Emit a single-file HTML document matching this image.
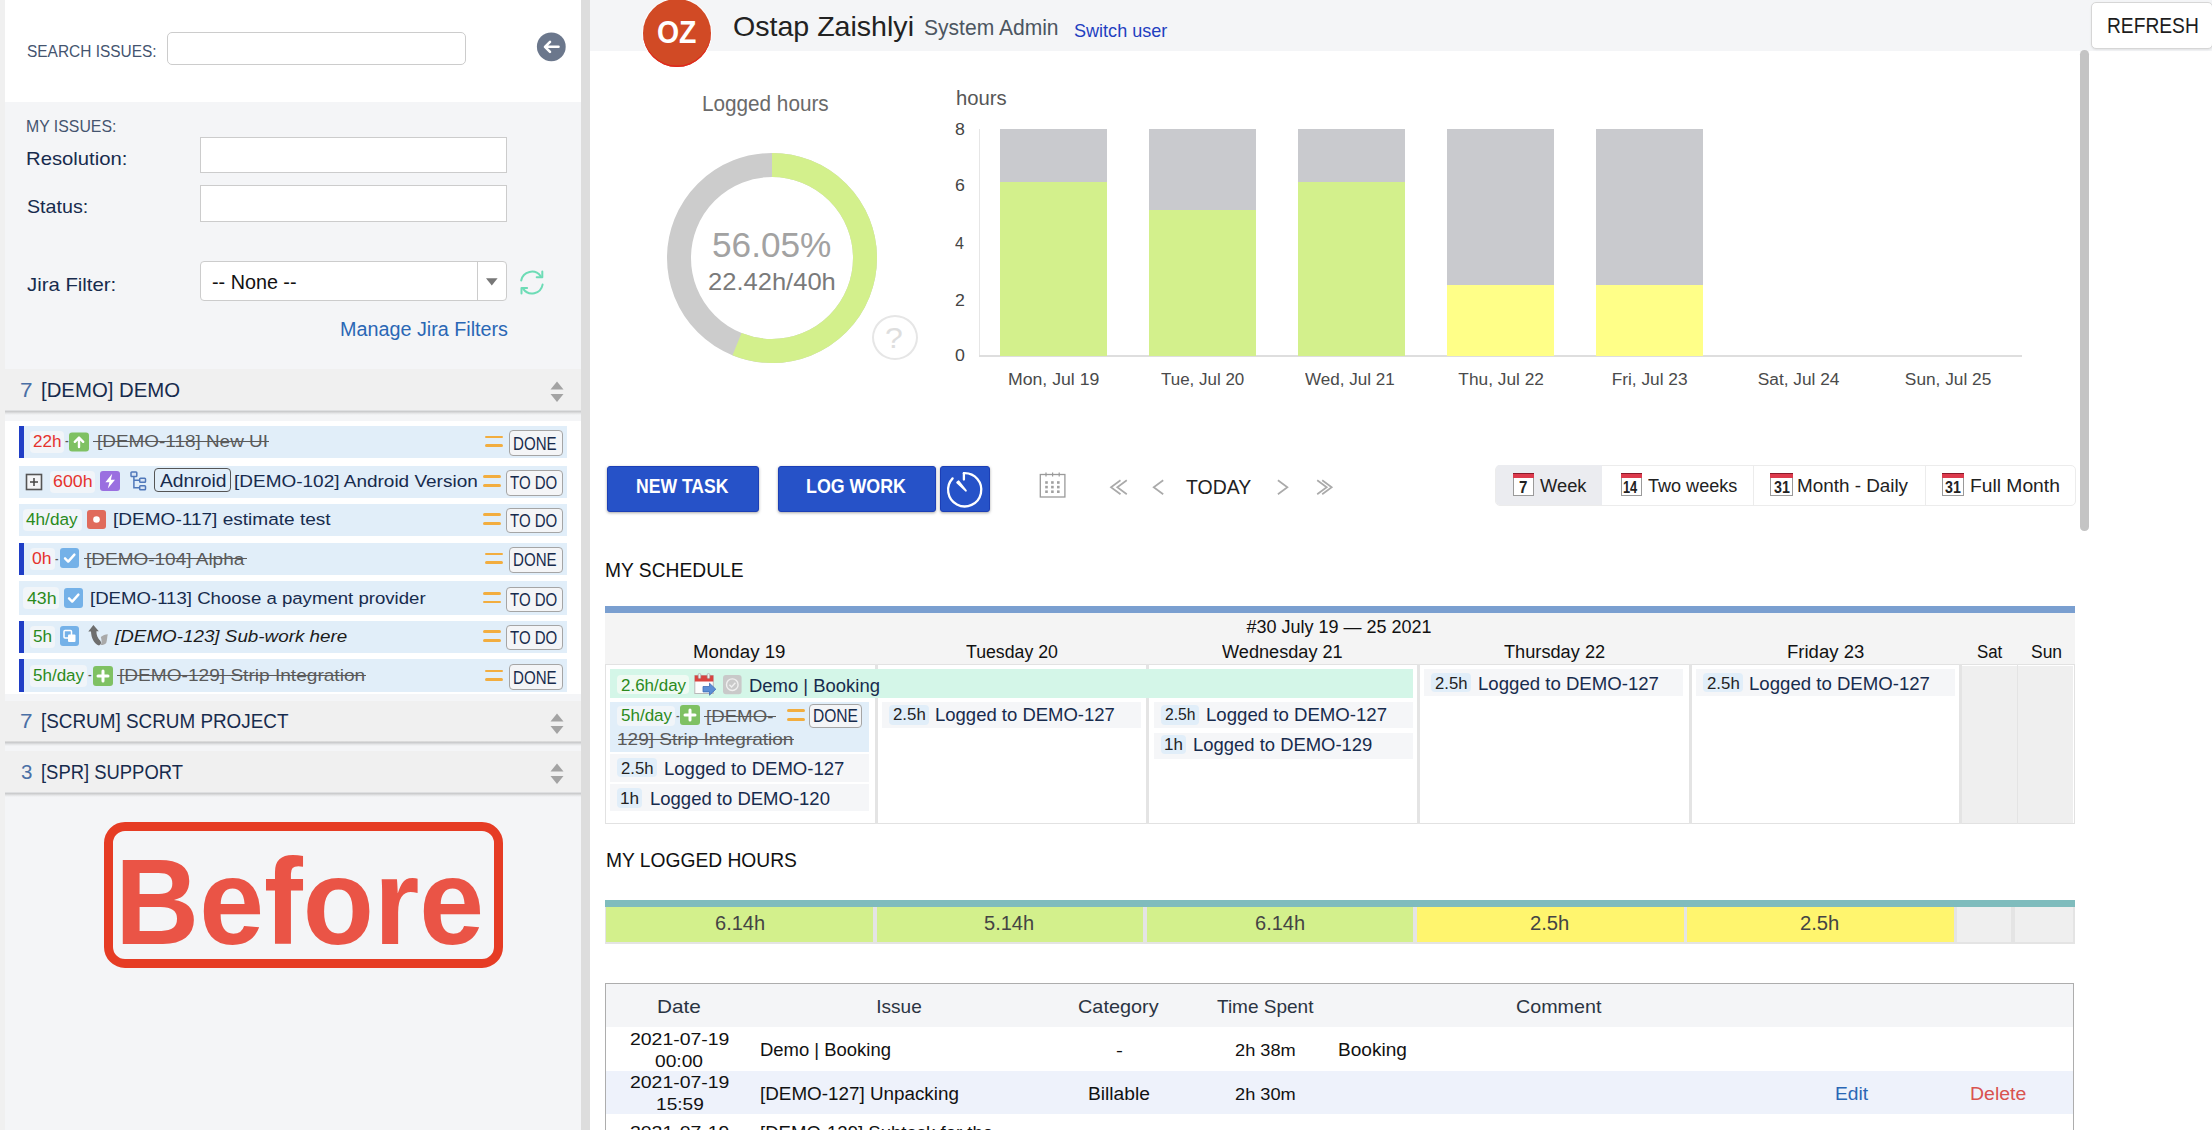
<!DOCTYPE html>
<html lang="en"><head><meta charset="utf-8"><title>Resource planning - My work</title>
<style>
html,body{margin:0;padding:0}
body{width:2212px;height:1130px;overflow:hidden;background:#fff;position:relative;font-family:"Liberation Sans",sans-serif}
.g{position:absolute;left:0;top:0;width:0;height:0}
.b{position:absolute;box-sizing:border-box}
.t{position:absolute;white-space:nowrap;line-height:1;transform-origin:0 0;display:block}
svg{display:block;overflow:visible}
svg text{font-family:"Liberation Sans",sans-serif}
</style></head>
<body>
<aside class="g" id="sidebar">
<div class="b" style="left:0px;top:0px;width:4.6px;height:1130px;background:#f0f0f0;"></div>
<div class="b" style="left:4.6px;top:0px;width:576.4px;height:1130px;background:#f4f5f7;"></div>
<div class="b" style="left:4.6px;top:0px;width:576.4px;height:102px;background:#ffffff;"></div>
<div class="b" style="left:581px;top:0px;width:9px;height:1130px;background:#dddddd;"></div>
<span class="t" style="left:26.5px;top:44px;font-size:16.8px;color:#44546f;transform:scaleX(0.9204);">SEARCH ISSUES:</span>
<div class="b" style="left:167px;top:32px;width:298.5px;height:33px;background:#fff;border:1px solid #ccc;border-radius:5px;"></div>
<svg class="b" style="left:536px;top:32px" width="30" height="30" viewBox="0 0 30 30"><circle cx="15.3" cy="14.8" r="14.4" fill="#6b778c"/><path d="M22.5 14.8H9.5M14 9.8l-5 5 5 5" fill="none" stroke="#fff" stroke-width="2.6" stroke-linecap="round" stroke-linejoin="round"/></svg>
<span class="t" style="left:25.58px;top:118px;font-size:17.3px;color:#44546f;transform:scaleX(0.9165);">MY ISSUES:</span>
<span class="t" style="left:25.91px;top:150px;font-size:18.5px;color:#172b4d;transform:scaleX(1.0950);">Resolution:</span>
<div class="b" style="left:199.5px;top:136.5px;width:307.5px;height:36.8px;background:#fff;border:1px solid #ccc;"></div>
<span class="t" style="left:27px;top:198px;font-size:18.5px;color:#172b4d;transform:scaleX(1.0629);">Status:</span>
<div class="b" style="left:199.5px;top:185.2px;width:307.5px;height:36.8px;background:#fff;border:1px solid #ccc;"></div>
<span class="t" style="left:27px;top:276px;font-size:18.5px;color:#172b4d;transform:scaleX(1.0992);">Jira Filter:</span>
<div class="b" style="left:199.5px;top:261px;width:307.5px;height:39.7px;background:#fff;border:1px solid #ccc;border-radius:4px;"></div>
<div class="b" style="left:477.3px;top:262px;width:1px;height:38px;background:#ccc;"></div>
<span class="t" style="left:212px;top:273px;font-size:19.5px;color:#111;transform:scaleX(1.0129);">-- None --</span>
<svg class="b" style="left:485px;top:277px" width="14" height="10" viewBox="0 0 14 10"><path d="M1 1.3h11.6L6.8 8.6z" fill="#777"/></svg>
<svg class="b" style="left:518px;top:269px" width="28" height="28" viewBox="0 0 28 28"><g fill="none" stroke="#6ddcb6" stroke-width="2" stroke-linecap="round" stroke-linejoin="round"><path d="M3.2 11.5A10.8 10.8 0 0 1 22.6 7.2"/><path d="M24.3 2.6v5.6h-5.6"/><path d="M24.6 15.6A10.8 10.8 0 0 1 5.2 19.9"/><path d="M3.5 24.5v-5.6h5.6"/></g></svg>
<span class="t" style="left:339.61px;top:319px;font-size:20px;color:#2a67b5;transform:scaleX(0.9878);">Manage Jira Filters</span>
<div class="b" style="left:4.6px;top:412px;width:576.4px;height:282px;background:#fff;"></div>
<div class="b" style="left:4.6px;top:412px;width:576.4px;height:8.5px;background:#f4f5f7;"></div>
<div class="b" style="left:4.6px;top:369px;width:576.4px;height:41px;background:#f0f0f0;"></div>
<div class="b" style="left:4.6px;top:409.5px;width:576.4px;height:5px;background:linear-gradient(rgba(0,0,0,.05),rgba(0,0,0,.17) 30%,rgba(0,0,0,.06) 70%,rgba(0,0,0,0));"></div>
<span class="t" style="left:19.9px;top:380px;font-size:20.5px;color:#4a6fa5;transform:scaleX(1.1000);">7</span>
<span class="t" style="left:40.51px;top:380px;font-size:20.5px;color:#172b4d;transform:scaleX(0.9932);">[DEMO] DEMO</span>
<svg class="b" style="left:549px;top:380px" width="16" height="24" viewBox="0 0 16 24"><path d="M1.5 9.5h13L8 1.5zM1.5 14h13L8 22z" fill="#a3a3a3"/></svg>
<div class="b" style="left:4.6px;top:701px;width:576.4px;height:40.5px;background:#f0f0f0;"></div>
<div class="b" style="left:4.6px;top:741px;width:576.4px;height:5px;background:linear-gradient(rgba(0,0,0,.05),rgba(0,0,0,.17) 30%,rgba(0,0,0,.06) 70%,rgba(0,0,0,0));"></div>
<span class="t" style="left:19.9px;top:711px;font-size:20.5px;color:#4a6fa5;transform:scaleX(1.1000);">7</span>
<span class="t" style="left:40.58px;top:711px;font-size:20.5px;color:#172b4d;transform:scaleX(0.9207);">[SCRUM] SCRUM PROJECT</span>
<svg class="b" style="left:549px;top:711.75px" width="16" height="24" viewBox="0 0 16 24"><path d="M1.5 9.5h13L8 1.5zM1.5 14h13L8 22z" fill="#a3a3a3"/></svg>
<div class="b" style="left:4.6px;top:751.3px;width:576.4px;height:40.7px;background:#f0f0f0;"></div>
<div class="b" style="left:4.6px;top:791.5px;width:576.4px;height:5px;background:linear-gradient(rgba(0,0,0,.05),rgba(0,0,0,.17) 30%,rgba(0,0,0,.06) 70%,rgba(0,0,0,0));"></div>
<span class="t" style="left:21px;top:762px;font-size:20.5px;color:#4a6fa5;">3</span>
<span class="t" style="left:40.6px;top:762px;font-size:20.5px;color:#172b4d;transform:scaleX(0.8987);">[SPR] SUPPORT</span>
<svg class="b" style="left:549px;top:762.15px" width="16" height="24" viewBox="0 0 16 24"><path d="M1.5 9.5h13L8 1.5zM1.5 14h13L8 22z" fill="#a3a3a3"/></svg>
<div class="b" style="left:19px;top:426.2px;width:548px;height:32px;background:#e1eef9;"></div>
<div class="b" style="left:19px;top:466px;width:548px;height:32px;background:#e1eef9;"></div>
<div class="b" style="left:19px;top:503.8px;width:548px;height:32px;background:#e1eef9;"></div>
<div class="b" style="left:19px;top:543.2px;width:548px;height:32px;background:#e1eef9;"></div>
<div class="b" style="left:19px;top:581.1px;width:548px;height:33.6px;background:#e1eef9;"></div>
<div class="b" style="left:19px;top:620.8px;width:548px;height:32px;background:#e1eef9;"></div>
<div class="b" style="left:19px;top:658.7px;width:548px;height:33.8px;background:#e1eef9;"></div>
<div class="b" style="left:19px;top:426.2px;width:5px;height:32px;background:#1f3ec6;"></div>
<div class="b" style="left:19px;top:543.2px;width:5px;height:32px;background:#1f3ec6;"></div>
<div class="b" style="left:19px;top:620.8px;width:5px;height:32px;background:#1f3ec6;"></div>
<div class="b" style="left:19px;top:658.7px;width:5px;height:33.8px;background:#1f3ec6;"></div>
<div class="b" style="left:30px;top:431.2px;width:33.5px;height:22px;background:#f1f5f9;border-radius:4px;"></div>
<span class="t" style="left:32.5px;top:433px;font-size:17.2px;color:#e5322d;transform:scaleX(0.9958);">22h</span>
<span class="t" style="left:64.8px;top:432px;font-size:17px;color:#5a5a5a;transform:scaleX(0.6600);">-</span>
<svg class="b" style="left:69.1px;top:432.4px" width="20" height="20" viewBox="0 0 20 20"><rect width="20" height="19" y=".5" rx="3" fill="#7fc163"/><path d="M10 15V6M5.8 9.8L10 5.6l4.2 4.2" fill="none" stroke="#fff" stroke-width="2.4" stroke-linecap="round" stroke-linejoin="round"/></svg>
<span class="t" style="left:96.7px;top:433px;font-size:17.2px;color:#5a5a5a;transform:scaleX(1.1004);">[DEMO-118] New UI</span>
<div class="b" style="left:93.2px;top:440.8px;width:176px;height:1.5px;background:#5a5a5a;"></div>
<div class="b" style="left:485px;top:435.6px;width:17.6px;height:2.9px;background:#f2ad3f;border-radius:1.5px;"></div>
<div class="b" style="left:485px;top:444.3px;width:17.6px;height:2.9px;background:#f2ad3f;border-radius:1.5px;"></div>
<div class="b" style="left:509.3px;top:430.2px;width:53.3px;height:25.7px;background:#f4f5f7;border:1px solid #a5a5a5;border-radius:4px;"></div>
<span class="t" style="left:513.46px;top:435px;font-size:18px;color:#172b4d;transform:scaleX(0.8392);">DONE</span>
<svg class="b" style="left:24.5px;top:473px" width="18" height="18" viewBox="0 0 18 18"><rect x="1.5" y="1.5" width="15" height="15" fill="#f4f5f7" stroke="#555" stroke-width="1.6"/><path d="M5 9h8M9 5v8" stroke="#444" stroke-width="1.5"/></svg>
<div class="b" style="left:49.6px;top:471px;width:45.2px;height:22px;background:#f1f5f9;border-radius:4px;"></div>
<span class="t" style="left:52.5px;top:473px;font-size:17.2px;color:#e5322d;transform:scaleX(1.0351);">600h</span>
<svg class="b" style="left:99.8px;top:471px" width="20" height="20" viewBox="0 0 20 20"><rect width="20" height="20" rx="3" fill="#9a6fe0"/><path d="M12.2 2.800L5.400 11.300h4l-1.600 6.100L15 8.700h-4.100z" fill="#fff"/></svg>
<svg class="b" style="left:129.5px;top:471px" width="20" height="20" viewBox="0 0 20 20"><g fill="#d9e4f4" stroke="#5078ba" stroke-width="1.500"><rect x="1" y="1" width="5.800" height="4.600" rx=".8"/><rect x="9.700" y="7.300" width="5.800" height="4" rx=".8"/><rect x="9.700" y="14.800" width="5.800" height="4" rx=".8"/><path d="M3.900 5.600v11.200h5.800M3.900 9.300h5.800" fill="none"/></g></svg>
<div class="b" style="left:154.3px;top:468.2px;width:76.7px;height:23.8px;border:1.3px solid #555;border-radius:4px;"></div>
<span class="t" style="left:160px;top:472px;font-size:18.8px;color:#172b4d;transform:scaleX(1.0266);">Adnroid</span>
<span class="t" style="left:234.4px;top:473px;font-size:17.2px;color:#172b4d;transform:scaleX(1.1046);">[DEMO-102] Android Version</span>
<div class="b" style="left:483.1px;top:475.3px;width:17.6px;height:2.9px;background:#f2ad3f;border-radius:1.5px;"></div>
<div class="b" style="left:483.1px;top:484px;width:17.6px;height:2.9px;background:#f2ad3f;border-radius:1.5px;"></div>
<div class="b" style="left:506px;top:470px;width:56.6px;height:25.7px;background:#f4f5f7;border:1px solid #a5a5a5;border-radius:4px;"></div>
<span class="t" style="left:509.8px;top:474px;font-size:18px;color:#172b4d;transform:scaleX(0.8346);">TO DO</span>
<div class="b" style="left:23px;top:508.8px;width:58.8px;height:22px;background:#f1f5f9;border-radius:4px;"></div>
<span class="t" style="left:26px;top:511px;font-size:17.2px;color:#2a8a1c;">4h/day</span>
<svg class="b" style="left:87px;top:510.2px" width="20" height="20" viewBox="0 0 20 20"><rect width="19" height="19" rx="3" fill="#e06b5c"/><circle cx="9.5" cy="9.5" r="3.3" fill="#fff"/></svg>
<span class="t" style="left:113.09px;top:511px;font-size:17.2px;color:#172b4d;transform:scaleX(1.1080);">[DEMO-117] estimate test</span>
<div class="b" style="left:483.1px;top:513.1px;width:17.6px;height:2.9px;background:#f2ad3f;border-radius:1.5px;"></div>
<div class="b" style="left:483.1px;top:521.8px;width:17.6px;height:2.9px;background:#f2ad3f;border-radius:1.5px;"></div>
<div class="b" style="left:506px;top:507.8px;width:56.6px;height:25.7px;background:#f4f5f7;border:1px solid #a5a5a5;border-radius:4px;"></div>
<span class="t" style="left:509.8px;top:512px;font-size:18px;color:#172b4d;transform:scaleX(0.8346);">TO DO</span>
<div class="b" style="left:30px;top:548.2px;width:24.7px;height:22px;background:#f1f5f9;border-radius:4px;"></div>
<span class="t" style="left:32px;top:550px;font-size:17.2px;color:#e5322d;transform:scaleX(1.0238);">0h</span>
<span class="t" style="left:54.9px;top:550px;font-size:17px;color:#5a5a5a;transform:scaleX(0.6200);">-</span>
<svg class="b" style="left:60px;top:548.2px" width="20" height="20" viewBox="0 0 20 20"><rect width="19" height="20" rx="3" fill="#74b1e8"/><path d="M5 10.3l3.2 3.3 6.2-7" fill="none" stroke="#fff" stroke-width="2.4" stroke-linecap="round" stroke-linejoin="round"/></svg>
<span class="t" style="left:86.1px;top:551px;font-size:17.2px;color:#5a5a5a;transform:scaleX(1.1045);">[DEMO-104] Alpha</span>
<div class="b" style="left:83.5px;top:557.8px;width:163.5px;height:1.5px;background:#5a5a5a;"></div>
<div class="b" style="left:485px;top:552.6px;width:17.6px;height:2.9px;background:#f2ad3f;border-radius:1.5px;"></div>
<div class="b" style="left:485px;top:561.3px;width:17.6px;height:2.9px;background:#f2ad3f;border-radius:1.5px;"></div>
<div class="b" style="left:509.3px;top:547.2px;width:53.3px;height:25.7px;background:#f4f5f7;border:1px solid #a5a5a5;border-radius:4px;"></div>
<span class="t" style="left:513.46px;top:551px;font-size:18px;color:#172b4d;transform:scaleX(0.8392);">DONE</span>
<div class="b" style="left:23px;top:587.1px;width:35.7px;height:22px;background:#f1f5f9;border-radius:4px;"></div>
<span class="t" style="left:26.5px;top:590px;font-size:17.2px;color:#2a8a1c;transform:scaleX(1.0314);">43h</span>
<svg class="b" style="left:64px;top:587.7px" width="20" height="20" viewBox="0 0 20 20"><rect width="19" height="20" rx="3" fill="#74b1e8"/><path d="M5 10.3l3.2 3.3 6.2-7" fill="none" stroke="#fff" stroke-width="2.4" stroke-linecap="round" stroke-linejoin="round"/></svg>
<span class="t" style="left:90.12px;top:590px;font-size:17.2px;color:#172b4d;transform:scaleX(1.0820);">[DEMO-113] Choose a payment provider</span>
<div class="b" style="left:483.1px;top:591.9px;width:17.6px;height:2.9px;background:#f2ad3f;border-radius:1.5px;"></div>
<div class="b" style="left:483.1px;top:600.6px;width:17.6px;height:2.9px;background:#f2ad3f;border-radius:1.5px;"></div>
<div class="b" style="left:506px;top:586.7px;width:56.6px;height:25.7px;background:#f4f5f7;border:1px solid #a5a5a5;border-radius:4px;"></div>
<span class="t" style="left:509.8px;top:591px;font-size:18px;color:#172b4d;transform:scaleX(0.8346);">TO DO</span>
<div class="b" style="left:30px;top:625.8px;width:24.7px;height:22px;background:#f1f5f9;border-radius:4px;"></div>
<span class="t" style="left:32.5px;top:628px;font-size:17.2px;color:#2a8a1c;transform:scaleX(0.9968);">5h</span>
<svg class="b" style="left:60px;top:625.8px" width="20" height="20" viewBox="0 0 20 20"><rect width="19" height="20" rx="3" fill="#74b1e8"/><rect x="4" y="4.5" width="7.5" height="7.5" rx="1" fill="none" stroke="#fff" stroke-width="1.5"/><rect x="8" y="8.5" width="7.5" height="7.5" rx="1" fill="#fff"/></svg>
<svg class="b" style="left:87.5px;top:625.3px" width="20" height="20" viewBox="0 0 20 20"><path d="M5.4.1l5.400 6.100H8.400c0 3.800 1.100 6.800 4.100 9.800 1 1.500.8 3.500-1.500 4.500C6 19 3.200 13 3 6.600H.3z" fill="#6e6e6e"/><path d="M12.8 12c1.700-1.500 4.700-2.500 7-2.700-.8 2.700-.6 6.200-1.600 8.700-1.700 1.800-3.700 2.300-5.700 2 1.500-2 1.300-5 .3-8z" fill="#a9a9a9"/></svg>
<span class="t" style="left:115.4px;top:628px;font-size:17.2px;color:#1b1b1b;transform:scaleX(1.0951);font-style:italic;">[DEMO-123] Sub-work here</span>
<div class="b" style="left:483.1px;top:630.1px;width:17.6px;height:2.9px;background:#f2ad3f;border-radius:1.5px;"></div>
<div class="b" style="left:483.1px;top:638.8px;width:17.6px;height:2.9px;background:#f2ad3f;border-radius:1.5px;"></div>
<div class="b" style="left:506px;top:624.8px;width:56.6px;height:25.7px;background:#f4f5f7;border:1px solid #a5a5a5;border-radius:4px;"></div>
<span class="t" style="left:509.8px;top:629px;font-size:18px;color:#172b4d;transform:scaleX(0.8346);">TO DO</span>
<div class="b" style="left:30px;top:664.7px;width:57.2px;height:22px;background:#f1f5f9;border-radius:4px;"></div>
<span class="t" style="left:32.5px;top:667px;font-size:17.2px;color:#2a8a1c;transform:scaleX(0.9902);">5h/day</span>
<span class="t" style="left:88.2px;top:666px;font-size:17px;color:#5a5a5a;transform:scaleX(0.6400);">-</span>
<svg class="b" style="left:92.6px;top:665.5px" width="20" height="20" viewBox="0 0 20 20"><rect width="20" height="20" rx="3" fill="#7fc163"/><path d="M10 5v10M5 10h10" stroke="#fff" stroke-width="3" stroke-linecap="round"/></svg>
<span class="t" style="left:119.29px;top:667px;font-size:17.2px;color:#5a5a5a;transform:scaleX(1.1106);">[DEMO-129] Strip Integration</span>
<div class="b" style="left:117px;top:674.9px;width:248.5px;height:1.5px;background:#5a5a5a;"></div>
<div class="b" style="left:485px;top:669.6px;width:17.6px;height:2.9px;background:#f2ad3f;border-radius:1.5px;"></div>
<div class="b" style="left:485px;top:678.3px;width:17.6px;height:2.9px;background:#f2ad3f;border-radius:1.5px;"></div>
<div class="b" style="left:509.3px;top:664.4px;width:53.3px;height:25.7px;background:#f4f5f7;border:1px solid #a5a5a5;border-radius:4px;"></div>
<span class="t" style="left:513.46px;top:669px;font-size:18px;color:#172b4d;transform:scaleX(0.8392);">DONE</span>
<div class="b" style="left:104.3px;top:822px;width:398.5px;height:146px;border:9px solid #e63c24;border-radius:21px;"></div>
<span class="t" style="left:115.33px;top:842px;font-size:121.5px;color:#ea5446;transform:scaleX(0.9591);font-weight:bold;">Before</span>
</aside>
<header class="g" id="summary">
<div class="b" style="left:590px;top:0px;width:1622px;height:51px;background:#f4f5f7;"></div>
<div class="b" style="left:642.8px;top:-0.8px;width:67.9px;height:67.9px;background:#d14a25;border-radius:50%;box-shadow:inset 0 -1.5px 0 #e0281c,0 0 0 1px rgba(255,255,255,.85);"></div>
<span class="t" style="left:656.68px;top:17px;font-size:31px;color:#fff;transform:scaleX(0.9166);font-weight:bold;">OZ</span>
<span class="t" style="left:733.36px;top:13px;font-size:27.5px;color:#222;transform:scaleX(1.0388);">Ostap Zaishlyi</span>
<span class="t" style="left:924.2px;top:18px;font-size:21.5px;color:#4c5661;transform:scaleX(0.9794);">System Admin</span>
<span class="t" style="left:1074px;top:21px;font-size:19px;color:#1f3fc0;transform:scaleX(0.9507);">Switch user</span>
<div class="b" style="left:2091px;top:1.5px;width:122px;height:47.3px;background:#fff;border:1px solid #d6d6d6;border-radius:5px;box-shadow:0 1px 2px rgba(0,0,0,.08);"></div>
<span class="t" style="left:2106.83px;top:15px;font-size:22px;color:#1d1d1d;transform:scaleX(0.8728);">REFRESH</span>
<div class="b" style="left:2080.3px;top:49.7px;width:8.6px;height:481.8px;background:#c4c4c4;border-radius:4.3px;"></div>
<span class="t" style="left:702.44px;top:94px;font-size:21.5px;color:#6a6a6a;transform:scaleX(0.9634);">Logged hours</span>
<svg class="b" style="left:660px;top:146px" width="224" height="224" viewBox="660 146 224 224"><circle cx="772" cy="258" r="93" fill="none" stroke="#cccccc" stroke-width="24"/><circle cx="772" cy="258" r="93" fill="none" stroke="#d3f08c" stroke-width="24" stroke-dasharray="327.52 256.82" transform="rotate(-90 772 258)"/></svg>
<span class="t" style="left:712.19px;top:227px;font-size:35px;color:#a2a2a2;transform:scaleX(1.0061);">56.05%</span>
<span class="t" style="left:707.93px;top:270px;font-size:23.8px;color:#7a7a7a;transform:scaleX(1.0730);">22.42h/40h</span>
<div class="b" style="left:871.5px;top:314.5px;width:46px;height:45px;border:2px solid #e6e6e6;border-radius:50%;"></div>
<span class="t" style="left:885.43px;top:323px;font-size:30px;color:#dedede;transform:scaleX(1.0667);">?</span>
<span class="t" style="left:956.01px;top:88px;font-size:20.5px;color:#565656;transform:scaleX(0.9894);">hours</span>
<div class="b" style="left:978.5px;top:129px;width:1.5px;height:228px;background:#e6e6e6;"></div>
<div class="b" style="left:978.5px;top:355.4px;width:1043.5px;height:1.6px;background:#dedede;"></div>
<div class="b" style="left:1000px;top:129px;width:107px;height:227px;background:#c9cace;"></div>
<div class="b" style="left:1000px;top:182px;width:107px;height:174px;background:#d3f08c;"></div>
<div class="b" style="left:1149px;top:129px;width:107px;height:227px;background:#c9cace;"></div>
<div class="b" style="left:1149px;top:210px;width:107px;height:146px;background:#d3f08c;"></div>
<div class="b" style="left:1298px;top:129px;width:107px;height:227px;background:#c9cace;"></div>
<div class="b" style="left:1298px;top:182px;width:107px;height:174px;background:#d3f08c;"></div>
<div class="b" style="left:1447px;top:129px;width:107px;height:227px;background:#c9cace;"></div>
<div class="b" style="left:1447px;top:285px;width:107px;height:71px;background:#ffff88;"></div>
<div class="b" style="left:1596px;top:129px;width:107px;height:227px;background:#c9cace;"></div>
<div class="b" style="left:1596px;top:285px;width:107px;height:71px;background:#ffff88;"></div>
<span class="t" style="left:954.7px;top:121px;font-size:17.2px;color:#444;transform:scaleX(1.0333);">8</span>
<span class="t" style="left:954.7px;top:177px;font-size:17.2px;color:#444;transform:scaleX(1.0333);">6</span>
<span class="t" style="left:954.7px;top:235px;font-size:17.2px;color:#444;transform:scaleX(0.9300);">4</span>
<span class="t" style="left:954.7px;top:292px;font-size:17.2px;color:#444;transform:scaleX(1.0333);">2</span>
<span class="t" style="left:954.7px;top:347px;font-size:17.2px;color:#444;transform:scaleX(1.0333);">0</span>
<span class="t" style="left:1007.78px;top:371px;font-size:17.3px;color:#4a4a4a;transform:scaleX(1.0225);">Mon, Jul 19</span>
<span class="t" style="left:1160.8px;top:371px;font-size:17.3px;color:#4a4a4a;transform:scaleX(0.9817);">Tue, Jul 20</span>
<span class="t" style="left:1305.2px;top:371px;font-size:17.3px;color:#4a4a4a;transform:scaleX(0.9875);">Wed, Jul 21</span>
<span class="t" style="left:1458.36px;top:371px;font-size:17.3px;color:#4a4a4a;">Thu, Jul 22</span>
<span class="t" style="left:1611.67px;top:371px;font-size:17.3px;color:#4a4a4a;">Fri, Jul 23</span>
<span class="t" style="left:1757.78px;top:371px;font-size:17.3px;color:#4a4a4a;">Sat, Jul 24</span>
<span class="t" style="left:1904.87px;top:371px;font-size:17.3px;color:#4a4a4a;">Sun, Jul 25</span>
</header>
<section class="g" id="schedule">
<div class="b" style="left:606.5px;top:466px;width:152.5px;height:45.8px;background:#2652c8;border:1px solid #1c3fb6;border-radius:3px;box-shadow:0 1px 3px rgba(0,0,0,.35);"></div>
<span class="t" style="left:636.31px;top:477px;font-size:19.8px;color:#fff;transform:scaleX(0.8888);font-weight:bold;">NEW TASK</span>
<div class="b" style="left:778px;top:466px;width:158px;height:45.8px;background:#2652c8;border:1px solid #1c3fb6;border-radius:3px;box-shadow:0 1px 3px rgba(0,0,0,.35);"></div>
<span class="t" style="left:806.4px;top:477px;font-size:19.8px;color:#fff;transform:scaleX(0.9007);font-weight:bold;">LOG WORK</span>
<div class="b" style="left:940px;top:466px;width:50.3px;height:45.8px;background:#2652c8;border:1px solid #1c3fb6;border-radius:3px;box-shadow:0 1px 3px rgba(0,0,0,.35);"></div>
<svg class="b" style="left:944px;top:469px" width="42" height="42" viewBox="0 0 42 42"><g fill="none" stroke="#fff" stroke-width="2.3" stroke-linecap="round"><path d="M19.9 4.2A16.6 16.6 0 1 1 8.6 9.4"/><path d="M19.9 4.2v6.300"/></g><path d="M21.8 21.600L13.200 13.600l1.300-1.200z" fill="#fff" stroke="#fff" stroke-width="2" stroke-linejoin="round"/></svg>
<svg class="b" style="left:1038px;top:471px" width="30" height="28" viewBox="0 0 30 28"><rect x="2.300" y="3.500" width="24.600" height="22.500" fill="#fff" stroke="#9a9a9a" stroke-width="1.300"/><path d="M8 1.500v4M14.600 1.500v4M21.200 1.500v4" stroke="#9a9a9a" stroke-width="1.200"/><g fill="#a0a0a0"><rect x="7.2" y="10.2" width="2.600" height="2.600"/><rect x="7.2" y="14.8" width="2.600" height="2.600"/><rect x="7.2" y="19.4" width="2.600" height="2.600"/><rect x="13.1" y="10.2" width="2.600" height="2.600"/><rect x="13.1" y="14.8" width="2.600" height="2.600"/><rect x="13.1" y="19.4" width="2.600" height="2.600"/><rect x="19" y="10.2" width="2.600" height="2.600"/><rect x="19" y="14.8" width="2.600" height="2.600"/><rect x="19" y="19.4" width="2.600" height="2.600"/></g></svg>
<svg class="b" style="left:0;top:0" width="2212" height="1130" viewBox="0 0 2212 1130"><path d="M1120.5 480.300L1111 487.300L1120.5 494.300M1126.8 480.300L1117.3 487.300L1126.8 494.300M1163.2 480.300L1153.7 487.300L1163.2 494.300M1277.9 480.300L1287.4 487.300L1277.9 494.300M1317.2 480.300L1326.7 487.300L1317.2 494.300M1322.2 480.300L1331.7 487.300L1322.2 494.300" fill="none" stroke="#aaaaaa" stroke-width="1.700"/></svg>
<span class="t" style="left:1185.8px;top:477px;font-size:20.5px;color:#222;transform:scaleX(0.9485);">TODAY</span>
<div class="b" style="left:1495.4px;top:464.6px;width:580.2px;height:41.4px;background:#fff;border:1px solid #ececec;border-radius:5px;"></div>
<div class="b" style="left:1496px;top:465.2px;width:106.4px;height:40.2px;background:#ebecf0;border-radius:4px 0 0 4px;"></div>
<div class="b" style="left:1752.8px;top:465.5px;width:1.3px;height:39.5px;background:#ececec;"></div>
<div class="b" style="left:1925.1px;top:465.5px;width:1.3px;height:39.5px;background:#ececec;"></div>
<div class="b" style="left:1512.9px;top:473px;width:20.8px;height:22.8px;background:#fff;border:1px solid #9a9a9a;"></div>
<div class="b" style="left:1512.9px;top:473px;width:20.8px;height:5.4px;background:#dc3a4c;border-top:1px solid #8b1a2b;"></div>
<span class="t" style="left:1519.2px;top:480px;font-size:15.8px;color:#222;transform:scaleX(0.9556);font-weight:bold;">7</span>
<span class="t" style="left:1540.1px;top:477px;font-size:18.3px;color:#222;">Week</span>
<div class="b" style="left:1621px;top:473px;width:20.9px;height:22.8px;background:#fff;border:1px solid #9a9a9a;"></div>
<div class="b" style="left:1621px;top:473px;width:20.9px;height:5.4px;background:#dc3a4c;border-top:1px solid #8b1a2b;"></div>
<span class="t" style="left:1623.19px;top:480px;font-size:15.8px;color:#222;transform:scaleX(0.8102);font-weight:bold;">14</span>
<span class="t" style="left:1648.2px;top:477px;font-size:18.3px;color:#222;transform:scaleX(0.9869);">Two weeks</span>
<div class="b" style="left:1770.3px;top:473px;width:22.7px;height:22.8px;background:#fff;border:1px solid #9a9a9a;"></div>
<div class="b" style="left:1770.3px;top:473px;width:22.7px;height:5.4px;background:#dc3a4c;border-top:1px solid #8b1a2b;"></div>
<span class="t" style="left:1773.5px;top:480px;font-size:15.8px;color:#222;transform:scaleX(0.8996);font-weight:bold;">31</span>
<span class="t" style="left:1797.47px;top:477px;font-size:18.3px;color:#222;transform:scaleX(1.0312);">Month - Daily</span>
<div class="b" style="left:1941.6px;top:473px;width:22.7px;height:22.8px;background:#fff;border:1px solid #9a9a9a;"></div>
<div class="b" style="left:1941.6px;top:473px;width:22.7px;height:5.4px;background:#dc3a4c;border-top:1px solid #8b1a2b;"></div>
<span class="t" style="left:1944.8px;top:480px;font-size:15.8px;color:#222;transform:scaleX(0.8996);font-weight:bold;">31</span>
<span class="t" style="left:1969.55px;top:477px;font-size:18.3px;color:#222;transform:scaleX(1.0532);">Full Month</span>
<span class="t" style="left:605.36px;top:560px;font-size:20.5px;color:#111;transform:scaleX(0.9378);">MY SCHEDULE</span>
<div class="b" style="left:605px;top:606px;width:1469.5px;height:7.3px;background:#7a9fd0;"></div>
<div class="b" style="left:605px;top:613.3px;width:1469.5px;height:50.7px;background:#f4f4f4;"></div>
<span class="t" style="left:1246.4px;top:618px;font-size:18px;color:#111;">#30 July 19 — 25 2021</span>
<span class="t" style="left:693.16px;top:643px;font-size:18px;color:#111;transform:scaleX(1.0381);">Monday 19</span>
<span class="t" style="left:965.5px;top:643px;font-size:18px;color:#111;transform:scaleX(0.9841);">Tuesday 20</span>
<span class="t" style="left:1222.4px;top:643px;font-size:18px;color:#111;transform:scaleX(1.0080);">Wednesday 21</span>
<span class="t" style="left:1504px;top:643px;font-size:18px;color:#111;transform:scaleX(1.0106);">Thursday 22</span>
<span class="t" style="left:1786.57px;top:643px;font-size:18px;color:#111;transform:scaleX(1.0294);">Friday 23</span>
<span class="t" style="left:1976.7px;top:643px;font-size:18px;color:#111;transform:scaleX(0.9365);">Sat</span>
<span class="t" style="left:2030.6px;top:643px;font-size:18px;color:#111;transform:scaleX(0.9704);">Sun</span>
<div class="b" style="left:605px;top:664px;width:1469.5px;height:160px;background:#fff;border:1.500px solid #e2e2e2;"></div>
<div class="b" style="left:1960.5px;top:665.5px;width:112.5px;height:157.5px;background:#efefef;"></div>
<div class="b" style="left:875.2px;top:664px;width:3px;height:160px;background:#e4e4e4;"></div>
<div class="b" style="left:1145.5px;top:664px;width:3px;height:160px;background:#e4e4e4;"></div>
<div class="b" style="left:1417.3px;top:664px;width:3px;height:160px;background:#e4e4e4;"></div>
<div class="b" style="left:1689.3px;top:664px;width:3px;height:160px;background:#e4e4e4;"></div>
<div class="b" style="left:1958.5px;top:664px;width:3px;height:160px;background:#e4e4e4;"></div>
<div class="b" style="left:2016.5px;top:664px;width:1.8px;height:160px;background:#e4e4e4;"></div>
<div class="b" style="left:610px;top:669.2px;width:803.2px;height:28.8px;background:#d4f6e8;"></div>
<div class="b" style="left:617.3px;top:675px;width:71.7px;height:19.3px;background:#effaf3;border-radius:4px;"></div>
<span class="t" style="left:620.5px;top:677px;font-size:17.2px;color:#2a8a1c;transform:scaleX(0.9873);">2.6h/day</span>
<svg class="b" style="left:694px;top:673px" width="23" height="24" viewBox="0 0 23 24"><rect x=".8" y="2.500" width="18.500" height="18" fill="#fdfdfd" stroke="#b9b9b9" stroke-width="1"/><rect x=".8" y="2.500" width="18.500" height="6" fill="#d9433f"/><rect x="4.200" y=".6" width="2.600" height="4.800" rx="1" fill="#eee" stroke="#999" stroke-width=".6"/><rect x="13.200" y=".6" width="2.600" height="4.800" rx="1" fill="#eee" stroke="#999" stroke-width=".6"/><path d="M9 13.500h6.500v-3.300l6.300 6-6.300 6v-3.300H9z" fill="#5c8fd6" stroke="#3d6db5" stroke-width=".8"/></svg>
<svg class="b" style="left:723px;top:675px" width="19" height="20" viewBox="0 0 19 20"><rect width="18.600" height="19.300" rx="3" fill="#c9c9c9"/><circle cx="9.300" cy="9.700" r="5.800" fill="none" stroke="#efefef" stroke-width="1.400"/><path d="M6.400 9.800l2.200 2.200 3.800-4.200" fill="none" stroke="#efefef" stroke-width="1.400"/></svg>
<span class="t" style="left:748.67px;top:677px;font-size:18px;color:#172b4d;transform:scaleX(1.0252);">Demo | Booking</span>
<div class="b" style="left:610px;top:702px;width:259px;height:49.8px;background:#e1eef9;"></div>
<div class="b" style="left:617.3px;top:705.5px;width:57.4px;height:20.5px;background:#f1f5f9;border-radius:4px;"></div>
<span class="t" style="left:620.5px;top:707px;font-size:17.2px;color:#2a8a1c;transform:scaleX(0.9902);">5h/day</span>
<span class="t" style="left:675.7px;top:707px;font-size:17px;color:#5a5a5a;transform:scaleX(0.6400);">-</span>
<svg class="b" style="left:680px;top:705.3px" width="20" height="20" viewBox="0 0 20 20"><rect width="20" height="20" rx="3" fill="#7fc163"/><path d="M10 5v10M5 10h10" stroke="#fff" stroke-width="3" stroke-linecap="round"/></svg>
<span class="t" style="left:705.91px;top:708px;font-size:17.2px;color:#5a5a5a;transform:scaleX(1.0856);">[DEMO-</span>
<div class="b" style="left:704.4px;top:715.8px;width:71.2px;height:1.5px;background:#5a5a5a;"></div>
<div class="b" style="left:787.3px;top:709.2px;width:18px;height:3px;background:#f2ad3f;border-radius:1.500px;"></div>
<div class="b" style="left:787.3px;top:718.3px;width:18px;height:3px;background:#f2ad3f;border-radius:1.500px;"></div>
<div class="b" style="left:808.5px;top:704.4px;width:53.1px;height:23.9px;background:#f4f5f7;border:1px solid #a5a5a5;border-radius:4px;"></div>
<span class="t" style="left:813.11px;top:708px;font-size:17.5px;color:#172b4d;transform:scaleX(0.8898);">DONE</span>
<span class="t" style="left:617.29px;top:731px;font-size:17.2px;color:#5a5a5a;transform:scaleX(1.1050);">129] Strip Integration</span>
<div class="b" style="left:618px;top:738.6px;width:176px;height:1.5px;background:#5a5a5a;"></div>
<div class="b" style="left:610px;top:753.6px;width:259px;height:28.6px;background:#f5f6f8;"></div>
<div class="b" style="left:617.2px;top:757.7px;width:39.4px;height:19.5px;background:#e1eef9;border-radius:4px;"></div>
<span class="t" style="left:621px;top:760px;font-size:17.2px;color:#222;transform:scaleX(0.9729);">2.5h</span>
<span class="t" style="left:663.66px;top:761px;font-size:17.8px;color:#172b4d;transform:scaleX(1.0427);">Logged to DEMO-127</span>
<div class="b" style="left:610px;top:784.1px;width:259px;height:27.3px;background:#f5f6f8;"></div>
<div class="b" style="left:617.2px;top:788px;width:25px;height:19.7px;background:#e1eef9;border-radius:4px;"></div>
<span class="t" style="left:620px;top:790px;font-size:17.2px;color:#222;">1h</span>
<span class="t" style="left:649.96px;top:791px;font-size:17.8px;color:#172b4d;transform:scaleX(1.0402);">Logged to DEMO-120</span>
<div class="b" style="left:881.8px;top:701.8px;width:259.2px;height:26.7px;background:#f5f6f8;"></div>
<div class="b" style="left:889px;top:705.2px;width:39.6px;height:19.6px;background:#e1eef9;border-radius:4px;"></div>
<span class="t" style="left:892.8px;top:706px;font-size:17.2px;color:#222;transform:scaleX(0.9789);">2.5h</span>
<span class="t" style="left:935.26px;top:707px;font-size:17.8px;color:#172b4d;transform:scaleX(1.0398);">Logged to DEMO-127</span>
<div class="b" style="left:1154px;top:701.8px;width:259.2px;height:26.7px;background:#f5f6f8;"></div>
<div class="b" style="left:1161.2px;top:705.2px;width:37.4px;height:19.6px;background:#e1eef9;border-radius:4px;"></div>
<span class="t" style="left:1165px;top:706px;font-size:17.2px;color:#222;transform:scaleX(0.9120);">2.5h</span>
<span class="t" style="left:1206.05px;top:707px;font-size:17.8px;color:#172b4d;transform:scaleX(1.0468);">Logged to DEMO-127</span>
<div class="b" style="left:1154px;top:733.3px;width:259.2px;height:25.4px;background:#f5f6f8;"></div>
<div class="b" style="left:1161.2px;top:734.5px;width:24.7px;height:19.3px;background:#e1eef9;border-radius:4px;"></div>
<span class="t" style="left:1164.01px;top:736px;font-size:17.2px;color:#222;transform:scaleX(0.9853);">1h</span>
<span class="t" style="left:1192.76px;top:737px;font-size:17.8px;color:#172b4d;transform:scaleX(1.0367);">Logged to DEMO-129</span>
<div class="b" style="left:1424.2px;top:669.4px;width:259.2px;height:26.6px;background:#f5f6f8;"></div>
<div class="b" style="left:1431.4px;top:672.9px;width:39.3px;height:19.4px;background:#e1eef9;border-radius:4px;"></div>
<span class="t" style="left:1435.2px;top:675px;font-size:17.2px;color:#222;transform:scaleX(0.9698);">2.5h</span>
<span class="t" style="left:1477.65px;top:676px;font-size:17.8px;color:#172b4d;transform:scaleX(1.0462);">Logged to DEMO-127</span>
<div class="b" style="left:1696.2px;top:669.4px;width:259.3px;height:26.6px;background:#f5f6f8;"></div>
<div class="b" style="left:1703.4px;top:672.9px;width:39.6px;height:19.4px;background:#e1eef9;border-radius:4px;"></div>
<span class="t" style="left:1707.2px;top:675px;font-size:17.2px;color:#222;transform:scaleX(0.9789);">2.5h</span>
<span class="t" style="left:1749.35px;top:676px;font-size:17.8px;color:#172b4d;transform:scaleX(1.0462);">Logged to DEMO-127</span>
</section>
<section class="g" id="logged">
<span class="t" style="left:605.56px;top:850px;font-size:20.5px;color:#111;transform:scaleX(0.9381);">MY LOGGED HOURS</span>
<div class="b" style="left:605px;top:899.6px;width:1469.5px;height:7.4px;background:#7fbcbd;"></div>
<div class="b" style="left:605px;top:907px;width:1469.5px;height:37.3px;background:#e4e4e4;"></div>
<div class="b" style="left:605.5px;top:907px;width:267.5px;height:35.3px;background:#d3f08c;"></div>
<span class="t" style="left:714.5px;top:914px;font-size:19.3px;color:#444;transform:scaleX(1.0394);">6.14h</span>
<div class="b" style="left:876.7px;top:907px;width:266.2px;height:35.3px;background:#d3f08c;"></div>
<span class="t" style="left:984.4px;top:914px;font-size:19.3px;color:#444;transform:scaleX(1.0394);">5.14h</span>
<div class="b" style="left:1146.6px;top:907px;width:266.9px;height:35.3px;background:#d3f08c;"></div>
<span class="t" style="left:1254.6px;top:914px;font-size:19.3px;color:#444;transform:scaleX(1.0394);">6.14h</span>
<div class="b" style="left:1417.3px;top:907px;width:266.5px;height:35.3px;background:#fff56e;"></div>
<span class="t" style="left:1530.3px;top:914px;font-size:19.3px;color:#444;transform:scaleX(1.0488);">2.5h</span>
<div class="b" style="left:1687.4px;top:907px;width:266.2px;height:35.3px;background:#fff56e;"></div>
<span class="t" style="left:1800.1px;top:914px;font-size:19.3px;color:#444;transform:scaleX(1.0488);">2.5h</span>
<div class="b" style="left:1957.3px;top:907px;width:53.9px;height:35.3px;background:#efefef;"></div>
<div class="b" style="left:2014.9px;top:907px;width:58.6px;height:35.3px;background:#efefef;"></div>
<div class="b" style="left:604.6px;top:982.5px;width:1469.8px;height:157.5px;background:#fff;border:1.600px solid #adadad;"></div>
<div class="b" style="left:606.2px;top:984.1px;width:1466.6px;height:43.2px;background:#f4f5f7;"></div>
<div class="b" style="left:606.2px;top:1071px;width:1466.6px;height:42.7px;background:#eef2fb;"></div>
<span class="t" style="left:657.11px;top:997px;font-size:19px;color:#2b3442;transform:scaleX(1.0942);">Date</span>
<span class="t" style="left:876.3px;top:997px;font-size:19px;color:#2b3442;">Issue</span>
<span class="t" style="left:1078.3px;top:997px;font-size:19px;color:#2b3442;transform:scaleX(1.0452);">Category</span>
<span class="t" style="left:1217px;top:997px;font-size:19px;color:#2b3442;">Time Spent</span>
<span class="t" style="left:1515.8px;top:997px;font-size:19px;color:#2b3442;transform:scaleX(1.0364);">Comment</span>
<span class="t" style="left:629.7px;top:1031px;font-size:17.2px;color:#111;transform:scaleX(1.1310);">2021-07-19</span>
<span class="t" style="left:655.4px;top:1053px;font-size:17.2px;color:#111;transform:scaleX(1.1166);">00:00</span>
<span class="t" style="left:759.55px;top:1042px;font-size:17.6px;color:#111;transform:scaleX(1.0490);">Demo | Booking</span>
<span class="t" style="left:1115.5px;top:1042px;font-size:17.2px;color:#111;transform:scaleX(1.2000);">-</span>
<span class="t" style="left:1235.2px;top:1042px;font-size:17.2px;color:#111;transform:scaleX(1.0595);">2h 38m</span>
<span class="t" style="left:1338.42px;top:1042px;font-size:17.6px;color:#111;transform:scaleX(1.0842);">Booking</span>
<span class="t" style="left:629.7px;top:1074px;font-size:17.2px;color:#111;transform:scaleX(1.1310);">2021-07-19</span>
<span class="t" style="left:655.59px;top:1096px;font-size:17.2px;color:#111;transform:scaleX(1.1121);">15:59</span>
<span class="t" style="left:759.53px;top:1086px;font-size:17.6px;color:#111;transform:scaleX(1.0706);">[DEMO-127] Unpacking</span>
<span class="t" style="left:1087.91px;top:1086px;font-size:17.6px;color:#111;transform:scaleX(1.0921);">Billable</span>
<span class="t" style="left:1235.2px;top:1086px;font-size:17.2px;color:#111;transform:scaleX(1.0595);">2h 30m</span>
<span class="t" style="left:1834.71px;top:1086px;font-size:17.6px;color:#2a67b5;transform:scaleX(1.0942);">Edit</span>
<span class="t" style="left:1970.49px;top:1086px;font-size:17.6px;color:#d9534f;transform:scaleX(1.1065);">Delete</span>
<span class="t" style="left:629.7px;top:1124px;font-size:17.2px;color:#111;transform:scaleX(1.1310);">2021-07-19</span>
<span class="t" style="left:759.55px;top:1125px;font-size:17.6px;color:#111;transform:scaleX(1.0547);">[DEMO-129] Subtask for the</span>
</section>
</body></html>
